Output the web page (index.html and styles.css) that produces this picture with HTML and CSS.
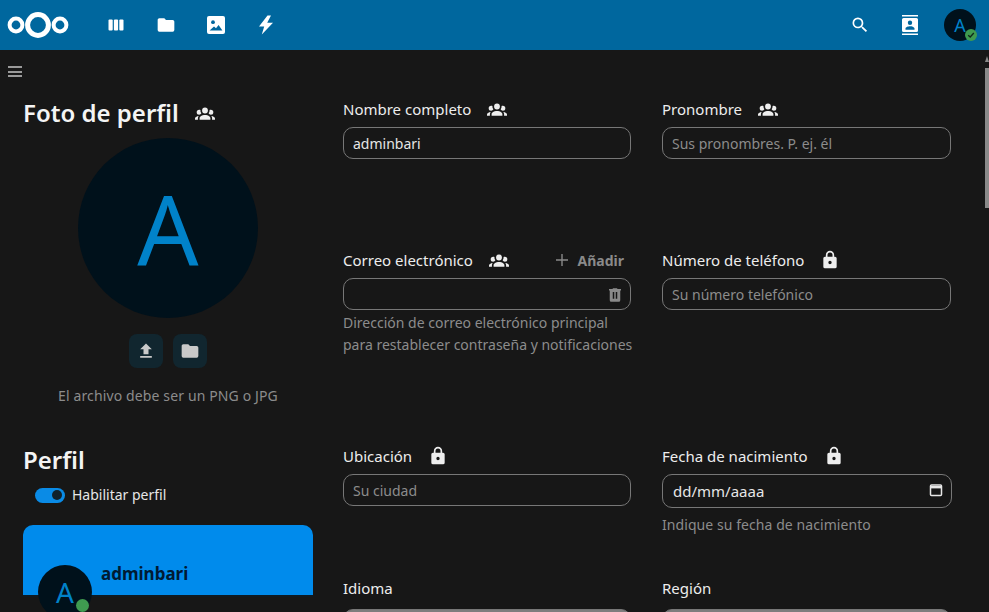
FILE: index.html
```html
<!DOCTYPE html>
<html lang="es">

<head>
    <meta charset="UTF-8">
    <meta name="viewport" content="width=device-width, initial-scale=1.0">
    <title>Ajustes personales</title>
    <link rel="stylesheet" href="styles.css">
</head>

<body>
    <svg class="icon-defs" width="0" height="0">
        <symbol id="i-group" viewBox="0 0 24 24"><path d="M12,5.5A3.5,3.5 0 0,1 15.5,9A3.5,3.5 0 0,1 12,12.5A3.5,3.5 0 0,1 8.5,9A3.5,3.5 0 0,1 12,5.5M5,8C5.56,8 6.08,8.15 6.53,8.42C6.38,9.85 6.8,11.27 7.66,12.38C7.16,13.34 6.16,14 5,14A3,3 0 0,1 2,11A3,3 0 0,1 5,8M19,8A3,3 0 0,1 22,11A3,3 0 0,1 19,14C17.84,14 16.84,13.34 16.34,12.38C17.2,11.27 17.62,9.85 17.47,8.42C17.92,8.15 18.44,8 19,8M5.5,18.25C5.5,16.18 8.41,14.5 12,14.5C15.59,14.5 18.5,16.18 18.5,18.25V20H5.5V18.25M0,20V18.5C0,17.11 1.89,15.94 4.45,15.6C3.86,16.28 3.5,17.22 3.5,18.25V20H0M24,20H20.5V18.25C20.5,17.22 20.14,16.28 19.55,15.6C22.11,15.94 24,17.11 24,18.5V20Z"/></symbol>
        <symbol id="i-lock" viewBox="0 0 24 24"><path d="M12,17A2,2 0 0,0 14,15C14,13.89 13.1,13 12,13A2,2 0 0,0 10,15A2,2 0 0,0 12,17M18,8A2,2 0 0,1 20,10V20A2,2 0 0,1 18,22H6A2,2 0 0,1 4,20V10C4,8.89 4.9,8 6,8H7V6A5,5 0 0,1 12,1A5,5 0 0,1 17,6V8H18M12,3A3,3 0 0,0 9,6V8H15V6A3,3 0 0,0 12,3Z"/></symbol>
        <symbol id="i-folder" viewBox="0 0 24 24"><path d="M10,4H4C2.89,4 2,4.89 2,6V18A2,2 0 0,0 4,20H20A2,2 0 0,0 22,18V8C22,6.89 21.1,6 20,6H12L10,4Z"/></symbol>
    </svg>

    <header class="topbar">
        <nav class="topbar-left">
            <svg class="logo" width="62" height="30" viewBox="0 0 62 30" fill="none" stroke="#fff">
                <circle cx="9" cy="15" r="6.4" stroke-width="4"/>
                <circle cx="31" cy="15" r="10.4" stroke-width="5"/>
                <circle cx="53" cy="15" r="6.4" stroke-width="4"/>
            </svg>
            <div class="app-icons">
                <a class="app-icon"><svg width="16" height="12" viewBox="0 0 16 12" fill="#fff"><rect x="0.5" y="0.5" width="4.2" height="11" rx="1"/><rect x="5.9" y="0.5" width="4.2" height="11" rx="1"/><rect x="11.3" y="0.5" width="4.2" height="11" rx="1"/></svg></a>
                <a class="app-icon"><svg width="20" height="20" fill="#fff"><use href="#i-folder"/></svg></a>
                <a class="app-icon"><svg width="20" height="20" viewBox="0 0 20 20"><rect x="1" y="1" width="18" height="18" rx="2" fill="#fff"/><circle cx="7" cy="7.2" r="1.9" fill="#00679e"/><path d="M3.6 15.6 8 11.4l2 1.8 2.6-3.2 3.8 5.6z" fill="#00679e"/></svg></a>
                <a class="app-icon"><svg width="16" height="20" viewBox="0 0 16 20" fill="#fff"><path d="M9.5 0.5 1 11.5h5.2L3.8 19.5 15 7.8H9.2L13 0.5z"/></svg></a>
            </div>
        </nav>
        <div class="topbar-right">
            <svg width="20" height="20" viewBox="0 0 24 24" fill="#fff"><path d="M9.5,3A6.5,6.5 0 0,1 16,9.5C16,11.11 15.41,12.59 14.44,13.73L14.71,14H15.5L20.5,19L19,20.5L14,15.5V14.71L13.73,14.44C12.59,15.41 11.11,16 9.5,16A6.5,6.5 0 0,1 3,9.5A6.5,6.5 0 0,1 9.5,3M9.5,5C7,5 5,7 5,9.5C5,12 7,14 9.5,14C12,14 14,12 14,9.5C14,7 12,5 9.5,5Z"/></svg>
            <svg class="contacts-icon" width="18" height="20" viewBox="0 0 18 20" fill="#fff"><path d="M1 0h16v1.6H1zM1 18.4h16V20H1z"/><path fill-rule="evenodd" d="M2.5 3h13A1.5 1.5 0 0 1 17 4.500v11a1.500 1.500 0 0 1-1.500 1.500h-13A1.500 1.500 0 0 1 1 15.500v-11A1.500 1.500 0 0 1 2.500 3zM9 5.600a2.200 2.200 0 1 0 0 4.400 2.200 2.200 0 0 0 0-4.400zM4.500 14.800h9v-1.300c0-1.500-3-2.300-4.500-2.300s-4.500.8-4.500 2.300z"/></svg>
            <div class="user-avatar">A
                <span class="status-badge"><svg width="8" height="8" viewBox="0 0 8 8" fill="none" stroke="#10261a" stroke-width="1.3"><path d="M1.200 4.200 3.200 6 6.800 2"/></svg></span>
            </div>
        </div>
    </header>

    <button class="nav-toggle" aria-label="Menu"><span></span><span></span><span></span></button>

    <main class="settings">
        <aside class="side">
            <section class="photo">
                <h2 class="side-title">Foto de perfil <svg class="scope scope-title" width="20" height="20"><use href="#i-group"/></svg></h2>
                <div class="big-avatar">A</div>
                <div class="photo-actions">
                    <button class="square-btn"><svg width="20" height="20" viewBox="0 0 24 24" fill="#c9c9c9"><path d="M9,16V10H5L12,3L19,10H15V16H9M5,20V18H19V20H5Z"/></svg></button>
                    <button class="square-btn"><svg width="20" height="20" fill="#c9c9c9"><use href="#i-folder"/></svg></button>
                </div>
                <p class="photo-hint">El archivo debe ser un PNG o JPG</p>
            </section>

            <section class="profile">
                <h2 class="side-title">Perfil</h2>
                <label class="switch-row"><span class="switch"></span>Habilitar perfil</label>
                <div class="profile-card">
                    <div class="profile-card-head">
                        <div class="card-avatar">A<span class="card-dot"></span></div>
                        <span class="card-name">adminbari</span>
                    </div>
                </div>
            </section>
        </aside>

        <form class="fields">
            <div class="field">
                <div class="field-label">Nombre completo <svg class="scope" width="20" height="20"><use href="#i-group"/></svg></div>
                <input class="text-input" type="text" value="adminbari">
            </div>
            <div class="field">
                <div class="field-label">Pronombre <svg class="scope" width="20" height="20"><use href="#i-group"/></svg></div>
                <input class="text-input" type="text" placeholder="Sus pronombres. P. ej. él">
            </div>

            <div class="field">
                <div class="field-label">Correo electrónico <svg class="scope" width="20" height="20"><use href="#i-group"/></svg>
                    <span class="add-action"><svg width="16" height="16" viewBox="0 0 16 16" fill="#8a8a8a"><path d="M7.300 2h1.400v5.300H14v1.400H8.700V14H7.300V8.700H2V7.300h5.300z"/></svg><b>Añadir</b></span>
                </div>
                <div class="input-wrap">
                    <input class="text-input" type="email">
                    <svg class="input-icon" width="18" height="18" viewBox="0 0 24 24" fill="#8a8a8a"><path d="M9,3V4H4V6H5V19A2,2 0 0,0 7,21H17A2,2 0 0,0 19,19V6H20V4H15V3H9M9,8H11V17H9V8M13,8H15V17H13V8Z"/></svg>
                </div>
                <p class="field-hint field-hint-tight">Dirección de correo electrónico principal<br>para restablecer contraseña y notificaciones</p>
            </div>
            <div class="field">
                <div class="field-label">Número de teléfono <svg class="scope" width="20" height="20"><use href="#i-lock"/></svg></div>
                <input class="text-input" type="tel" placeholder="Su número telefónico">
            </div>

            <div class="field">
                <div class="field-label">Ubicación <svg class="scope" width="20" height="20"><use href="#i-lock"/></svg></div>
                <input class="text-input" type="text" placeholder="Su ciudad">
            </div>
            <div class="field">
                <div class="field-label">Fecha de nacimiento <svg class="scope" width="20" height="20"><use href="#i-lock"/></svg></div>
                <div class="input-wrap">
                    <input class="text-input text-input-date" type="text" value="dd/mm/aaaa">
                    <svg class="input-icon" width="16" height="16" viewBox="0 0 16 16" fill="none" stroke="#e8e8e8" stroke-width="1.500"><rect x="2.500" y="3" width="11" height="10.500" rx="1"/><path d="M2.500 5.200h11" stroke-width="2.400"/></svg>
                </div>
                <p class="field-hint">Indique su fecha de nacimiento</p>
            </div>

            <div class="field">
                <div class="field-label field-label-select">Idioma</div>
                <input class="text-input text-input-select" type="text">
            </div>
            <div class="field">
                <div class="field-label field-label-select">Región</div>
                <input class="text-input text-input-select" type="text">
            </div>
        </form>
    </main>

    <div class="scrollbar"><span class="scroll-arrow"></span><span class="scroll-thumb"></span></div>
</body>

</html>
```

FILE: styles.css
```css
html,
body {
    height: 100%;
}

body {
    font-family: "Noto Sans", "Open Sans", Arial, sans-serif;
    font-size: 14px;
    margin: 0;
    background-color: #171717;
    color: #e6e6e6;
    overflow: hidden;
}

.icon-defs {
    position: absolute;
}

.topbar {
    height: 50px;
    background-color: #00679e;
    display: flex;
    justify-content: space-between;
    align-items: center;
}

.topbar-left {
    display: flex;
    align-items: center;
}

.logo {
    margin-left: 7px;
}

.app-icons {
    display: flex;
    align-items: center;
    margin-left: 22px;
}

.app-icon {
    width: 50px;
    display: flex;
    justify-content: center;
}

.topbar-right {
    display: flex;
    align-items: center;
    gap: 31px;
    margin-right: 13px;
}

.contacts-icon {
    margin-right: -6px;
}

.user-avatar {
    width: 32px;
    height: 32px;
    border-radius: 50%;
    background-color: #00111b;
    color: #0082c9;
    font-size: 18px;
    line-height: 32px;
    text-align: center;
    position: relative;
}

.status-badge {
    position: absolute;
    right: -1px;
    bottom: 0;
    width: 12px;
    height: 12px;
    border-radius: 50%;
    background-color: #3f9b50;
    display: flex;
    align-items: center;
    justify-content: center;
}

.nav-toggle {
    display: flex;
    flex-direction: column;
    gap: 2.500px;
    background: none;
    border: none;
    padding: 0;
    margin: 16px 0 0 8px;
    width: 14px;
}

.nav-toggle span {
    height: 2px;
    width: 14px;
    background-color: #9a9a9a;
}

.settings {
    display: flex;
    padding-left: 23px;
    margin-top: 22px;
}

.side {
    width: 290px;
    margin-right: 30px;
}

.side-title {
    font-size: 24px;
    font-weight: 600;
    line-height: 32px;
    margin: -2px 0 0;
    color: #f4f4f4;
    display: flex;
    align-items: center;
}

.scope {
    fill: #eeeeee;
    margin-left: 16px;
    flex: none;
}

.scope-title {
    margin-left: 16px;
}

.big-avatar {
    width: 180px;
    height: 180px;
    border-radius: 50%;
    background-color: #00111b;
    color: #0082c9;
    font-size: 96px;
    line-height: 180px;
    text-align: center;
    margin: 9px auto 0;
}

.photo-actions {
    display: flex;
    justify-content: center;
    gap: 10px;
    margin-top: 16px;
}

.square-btn {
    width: 34px;
    height: 34px;
    border: none;
    border-radius: 8px;
    background-color: #11262f;
    padding: 0;
    display: flex;
    align-items: center;
    justify-content: center;
}

.photo-hint {
    margin: 18px 0 0;
    text-align: center;
    color: #8c8c8c;
    line-height: 20px;
    letter-spacing: 0.13px;
}

.profile {
    margin-top: 40px;
}

.switch-row {
    display: flex;
    align-items: center;
    gap: 7px;
    margin: 9px 0 0 12px;
    line-height: 20px;
    color: #e6e6e6;
}

.switch {
    width: 30px;
    height: 15px;
    border-radius: 8px;
    background-color: #0a8be6;
    position: relative;
}

.switch::after {
    content: "";
    position: absolute;
    right: 3px;
    top: 2.500px;
    width: 10px;
    height: 10px;
    border-radius: 50%;
    background-color: #10212c;
}

.profile-card {
    margin-top: 20px;
    height: 100px;
    border-radius: 10px;
    overflow: hidden;
}

.profile-card-head {
    height: 72px;
    background-color: #008bec;
    display: flex;
    align-items: flex-end;
    border-bottom: 2px solid #0f1a22;
    box-sizing: border-box;
    padding-left: 15px;
}

.card-avatar {
    width: 54px;
    height: 54px;
    border-radius: 50%;
    background-color: #00111b;
    color: #0082c9;
    font-size: 28px;
    line-height: 54px;
    text-align: center;
    position: relative;
    margin-bottom: -24px;
    flex: none;
}

.card-dot {
    position: absolute;
    right: 3px;
    bottom: 7px;
    width: 13px;
    height: 13px;
    border-radius: 50%;
    background-color: #3f9b50;
}

.card-name {
    font-size: 17px;
    font-weight: 700;
    color: #001a33;
    margin: 0 0 10px 9px;
}

.fields {
    display: grid;
    grid-template-columns: 288px 289px;
    grid-template-rows: 151px 196px 132px;
    column-gap: 31px;
    width: 608px;
}

.field-label {
    display: flex;
    align-items: center;
    height: 20px;
    margin-bottom: 8px;
    font-size: 15px;
    color: #ededed;
}

.field-label-select {
    margin-bottom: 11px;
}

.add-action {
    display: flex;
    align-items: center;
    gap: 8px;
    margin-left: auto;
    margin-right: 7px;
    color: #8a8a8a;
    font-size: 14px;
}

.input-wrap {
    position: relative;
}

.text-input {
    display: block;
    box-sizing: border-box;
    width: 100%;
    height: 32px;
    padding: 0 9px;
    border: 1px solid #777777;
    border-radius: 10px;
    background-color: #171717;
    color: #e6e6e6;
    font-family: inherit;
    font-size: 14px;
    outline: none;
}

.text-input::placeholder {
    color: #8c8c8c;
    opacity: 1;
}

.text-input-date {
    width: 290px;
    height: 34px;
    padding-left: 10px;
    font-size: 15px;
}

.text-input-select {
    background-color: #7d7d7d;
}

.input-icon {
    position: absolute;
    right: 7px;
    top: 8px;
}

.field-hint {
    margin: 6px 0 0;
    color: #8c8c8c;
    line-height: 22px;
    white-space: nowrap;
    letter-spacing: 0.07px;
}

.field-hint-tight {
    margin-top: 2px;
    letter-spacing: 0;
}

.scrollbar {
    position: absolute;
    top: 50px;
    right: 0;
    bottom: 0;
    width: 4px;
}

.scroll-arrow {
    display: block;
    margin: 6px auto 0;
    width: 0;
    height: 0;
    border-left: 2px solid transparent;
    border-right: 2px solid transparent;
    border-bottom: 6px solid #8a8a8a;
}

.scroll-thumb {
    display: block;
    margin-top: 6px;
    height: 140px;
    background-color: #8a8a8a;
}
```
